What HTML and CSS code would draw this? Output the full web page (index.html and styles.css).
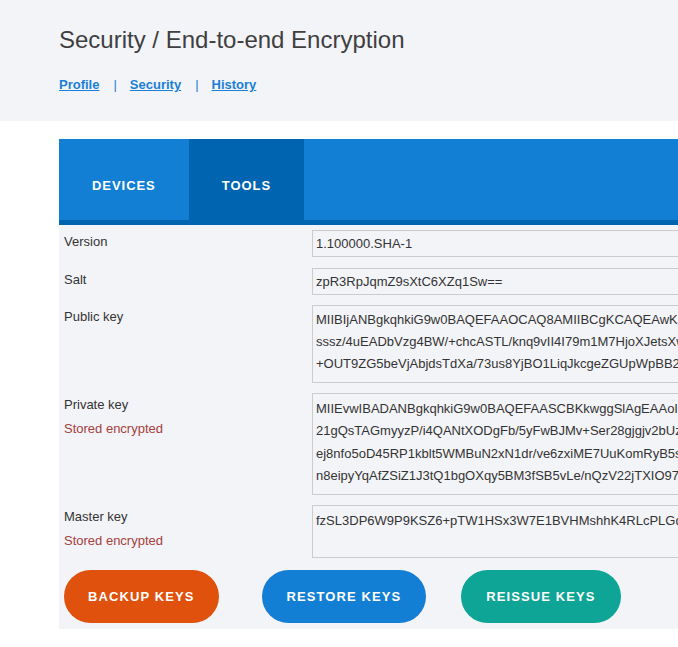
FILE: index.html
```html
<!DOCTYPE html>
<html lang="en">
<head>
<meta charset="utf-8">
<title>Security / End-to-end Encryption</title>
<link rel="stylesheet" href="styles.css">
</head>
<body>
<header class="page-head">
  <h1 class="title">Security / End-to-end Encryption</h1>
  <nav class="crumbs">
    <a href="#" class="crumb">Profile</a><span class="sep">|</span><a href="#" class="crumb">Security</a><span class="sep">|</span><a href="#" class="crumb">History</a>
  </nav>
</header>

<section class="panel">
  <div class="tabs">
    <div class="tab">DEVICES</div>
    <div class="tab active">TOOLS</div>
  </div>
  <div class="body">
    <div class="row first">
      <div class="label"><div>Version</div></div>
      <div class="field single">1.100000.SHA-1</div>
    </div>
    <div class="row">
      <div class="label"><div>Salt</div></div>
      <div class="field single">zpR3RpJqmZ9sXtC6XZq1Sw==</div>
    </div>
    <div class="row">
      <div class="label"><div>Public key</div></div>
      <div class="field multi pub">
        <div class="line">MIIBIjANBgkqhkiG9w0BAQEFAAOCAQ8AMIIBCgKCAQEAwKq7fTz3hR9pLmX2sVnQe8dYw</div>
        <div class="line">sssz/4uEADbVzg4BW/+chcASTL/knq9vII4I79m1M7HjoXJetsXw2Lr0PqKcM8uEgT</div>
        <div class="line">+OUT9ZG5beVjAbjdsTdXa/73us8YjBO1LiqJkcgeZGUpWpBB2xkT4VhN0cQaR7</div>
      </div>
    </div>
    <div class="row">
      <div class="label"><div>Private key</div><div class="note">Stored encrypted</div></div>
      <div class="field multi priv">
        <div class="line">MIIEvwIBADANBgkqhkiG9w0BAQEFAASCBKkwggSlAgEAAoIBAQDAqrt9PPeFH2ku</div>
        <div class="line">21gQsTAGmyyzP/i4QANtXODgFb/5yFwBJMv+Ser28gjgjv2bUzWq9kPn3Lx0aB</div>
        <div class="line">ej8nfo5oD45RP1kblt5WMBuN2xN1dr/ve6zxiME7UuKomRyB5sQ1Tz8vWm0</div>
        <div class="line">n8eipyYqAfZSiZ1J3tQ1bgOXqy5BM3fSB5vLe/nQzV22jTXIO97kLp4aDc</div>
      </div>
    </div>
    <div class="row">
      <div class="label"><div>Master key</div><div class="note">Stored encrypted</div></div>
      <div class="field multi master">
        <div class="line">fzSL3DP6W9P9KSZ6+pTW1HSx3W7E1BVHMshhK4RLcPLGq0eT5vYw2</div>
      </div>
    </div>
    <div class="actions">
      <button class="btn backup">BACKUP KEYS</button>
      <button class="btn restore">RESTORE KEYS</button>
      <button class="btn reissue">REISSUE KEYS</button>
    </div>
  </div>
</section>
</body>
</html>
```

FILE: styles.css
```css
html, body {
  margin: 0;
  padding: 0;
  overflow: hidden;
  background: #ffffff;
}

body {
  font-family: "Liberation Sans", Arial, sans-serif;
  font-size: 13px;
  color: #333333;
}

.page-head {
  background: #f3f4f8;
  height: 121px;
  box-sizing: border-box;
  padding: 26px 0 0 59px;
}

.title {
  margin: 0;
  font-weight: normal;
  font-size: 24px;
  line-height: 28px;
  color: #3f3f42;
}

.crumbs {
  margin-top: 21px;
  line-height: 20px;
  font-size: 13px;
  font-weight: bold;
}

.crumb {
  color: #1a7fd6;
  text-decoration: underline;
}

.sep {
  color: #1a7fd6;
  font-weight: normal;
  margin: 0 13px 0 14px;
}

.panel {
  margin: 18px 0 0 59px;
  width: 760px;
}

.tabs {
  display: flex;
  background: #137fd4;
  border-bottom: 5px solid #0064b0;
}

.tab {
  padding: 39px 33px 26px;
  line-height: 16px;
  font-size: 13px;
  font-weight: bold;
  letter-spacing: 0.95px;
  color: #ffffff;
}

.tab.active {
  background: #0064b0;
}

.body {
  background: #f3f4f8;
  padding: 5px 0 6px 5px;
  display: flex;
  flex-direction: column;
  gap: 10px;
}

.row {
  display: flex;
}

.row.first {
  margin-bottom: 1px;
}

.label {
  width: 248px;
  flex: none;
  line-height: 24px;
  color: #333333;
}

.note {
  color: #a6403d;
}

.field {
  flex: 1;
  box-sizing: border-box;
  border: 1px solid #cccccc;
  background: #f3f4f8;
  color: #333333;
  white-space: nowrap;
  overflow: hidden;
  padding-left: 3px;
}

.field.single {
  height: 27px;
  line-height: 25px;
}

.field.multi {
  line-height: 22px;
}

.field.pub {
  height: 78px;
  padding-top: 3px;
}

.field.priv {
  height: 102px;
  padding-top: 4px;
  line-height: 22.4px;
}

.field.master {
  height: 53px;
  padding-top: 4px;
}

.actions {
  display: flex;
  padding-top: 2px;
}

.btn {
  height: 53px;
  border: none;
  border-radius: 27px;
  padding: 0 24px;
  font-family: "Liberation Sans", Arial, sans-serif;
  font-size: 13px;
  font-weight: bold;
  letter-spacing: 1.1px;
  color: #ffffff;
  cursor: pointer;
}

.backup {
  background: #e0510d;
}

.restore {
  background: #137fd4;
  margin-left: 43px;
  padding: 0 25px;
}

.reissue {
  background: #0ea596;
  margin-left: 35px;
  padding: 0 25px;
}
```
